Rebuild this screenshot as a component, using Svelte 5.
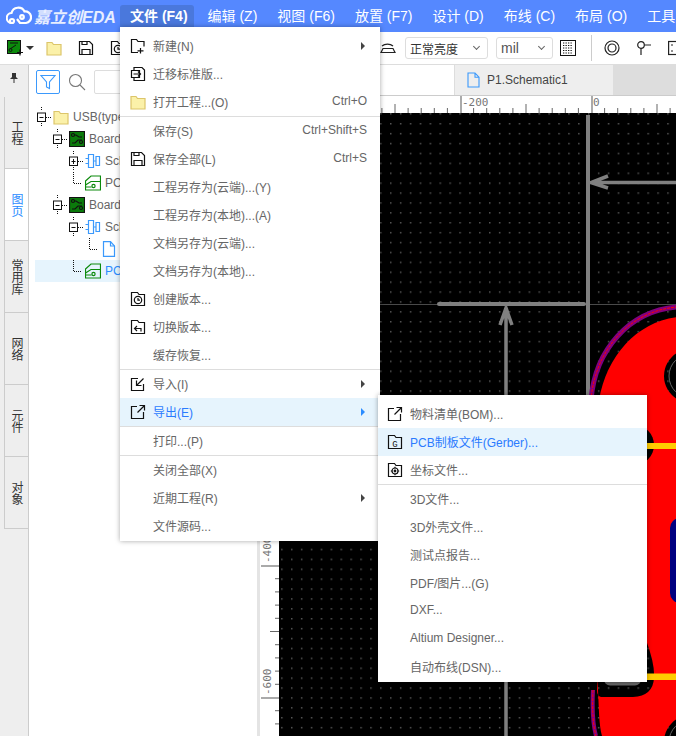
<script lang="ts">
  type Item = { label: string; icon?: string; key?: string; more?: boolean; active?: boolean; sep?: boolean };

  const topMenus = [
    { label: '文件 (F4)', active: true },
    { label: '编辑 (Z)' },
    { label: '视图 (F6)' },
    { label: '放置 (F7)' },
    { label: '设计 (D)' },
    { label: '布线 (C)' },
    { label: '布局 (O)' },
    { label: '工具 (T)' },
  ];

  const fileMenu: Item[] = [
    { label: '新建(N)', icon: 'newfolder', more: true },
    { label: '迁移标准版...', icon: 'migrate' },
    { label: '打开工程...(O)', icon: 'folder', key: 'Ctrl+O', sep: true },
    { label: '保存(S)', key: 'Ctrl+Shift+S' },
    { label: '保存全部(L)', icon: 'save', key: 'Ctrl+S' },
    { label: '工程另存为(云端)...(Y)' },
    { label: '工程另存为(本地)...(A)' },
    { label: '文档另存为(云端)...' },
    { label: '文档另存为(本地)...' },
    { label: '创建版本...', icon: 'version' },
    { label: '切换版本...', icon: 'switch' },
    { label: '缓存恢复...', sep: true },
    { label: '导入(I)', icon: 'import', more: true },
    { label: '导出(E)', icon: 'export', more: true, active: true, sep: true },
    { label: '打印...(P)', sep: true },
    { label: '关闭全部(X)' },
    { label: '近期工程(R)', more: true },
    { label: '文件源码...' },
  ];

  const exportMenu: Item[] = [
    { label: '物料清单(BOM)...', icon: 'export' },
    { label: 'PCB制板文件(Gerber)...', icon: 'gerber', active: true },
    { label: '坐标文件...', icon: 'coord', sep: true },
    { label: '3D文件...' },
    { label: '3D外壳文件...' },
    { label: '测试点报告...' },
    { label: 'PDF/图片...(G)' },
    { label: 'DXF...' },
    { label: 'Altium Designer...' },
    { label: '自动布线(DSN)...' },
  ];

  const sideTabs = [
    { label: '工程' },
    { label: '图页', active: true },
    { label: '常用库' },
    { label: '网络' },
    { label: '元件' },
    { label: '对象' },
  ];

  const tree = [
    { depth: 0, toggle: 'minus', icon: 'folder', label: 'USB(type-C)' },
    { depth: 1, toggle: 'minus', icon: 'board', label: 'Board1' },
    { depth: 2, toggle: 'plus', icon: 'sch', label: 'Schematic' },
    { depth: 2, toggle: 'leaf', icon: 'pcb', label: 'PCB1' },
    { depth: 1, toggle: 'minus', icon: 'board', label: 'Board2' },
    { depth: 2, toggle: 'minus', icon: 'sch', label: 'Schematic' },
    { depth: 3, toggle: 'leaf', icon: 'doc', label: 'P1' },
    { depth: 2, toggle: 'leaf', icon: 'pcb', label: 'PCB2', active: true },
  ];

  // top ruler: 0 sits at x=590, one small step is 13.1px
  const topTicks: { x: number; h: number; major: boolean }[] = [];
  for (let i = -16; i <= 7; i++) {
    const major = i % 10 === 0;
    const mid = !major && i % 5 === 0;
    topTicks.push({ x: 590 + i * 13.1, h: major ? 17 : mid ? 9 : 5, major });
  }

  // left ruler: -400 sits at y=565
  const leftTicks: { y: number; w: number; major: boolean }[] = [];
  for (let i = 0; i <= 13; i++) {
    const major = i % 10 === 0;
    const mid = !major && i % 5 === 0;
    leftTicks.push({ y: 565 + i * 13.2, w: major ? 18 : mid ? 9 : 4, major });
  }
</script>

{#snippet icon(name: string)}
  <svg class="ico" viewBox="0 0 16 16" width="16" height="16" fill="none" stroke="#111" stroke-width="1.2">
    {#if name === 'folder'}
      <path d="M1 2.500h5l1.500 2H15v10.500H1z" fill="#fbf1a9" stroke="#dcc56a" />
    {:else if name === 'newfolder'}
      <path d="M8 14.500H1.500V1.500h5l1.500 2h6v5" /><path d="M8 3.500h3M10.500 10v5.500M7.500 12.800h6" />
    {:else if name === 'migrate'}
      <path d="M4 4V1.500h8l2.500 2.500v10.500H4V12" /><path d="M1.500 4.500h8v7h-8z" fill="#fff" /><path d="M3.500 8h7M8 5.500 10.500 8 8 10.500" />
    {:else if name === 'save'}
      <path d="M1.500 1.500h10l3 3v10h-13z" /><path d="M4 14.500V9.500h8v5M4 1.500v3h5v-3" />
    {:else if name === 'version'}
      <path d="M1.500 14.500V1.500h6l1.500 2h5.500v11z" /><circle cx="8" cy="9" r="3.700" /><path d="M8 7v2.200h2" />
    {:else if name === 'switch'}
      <path d="M1.500 14.500V1.500h6l1.500 2h5.500v11z" /><path d="M4.500 9.500h6.500v3M7 7 4.500 9.500 7 12" />
    {:else if name === 'import'}
      <path d="M8 2.500H1.500v12h12V8" /><path d="M13.500 2.500 7 9M6.500 4.500V9.500H11.500" />
    {:else if name === 'export'}
      <path d="M7 2.500H1.500v12h12V8" /><path d="M7.500 8.500 14 2M9.500 1.500h5v5" />
    {:else if name === 'gerber'}
      <path d="M1.500 14.500V1.500h6l1.500 2h5.500v11z" />
      <text x="8" y="12.500" text-anchor="middle" class="gtext">G</text>
    {:else if name === 'coord'}
      <path d="M1.500 14.500V1.500h6l1.500 2h5.500v11z" /><circle cx="8" cy="9" r="3" /><circle cx="8" cy="9" r="0.800" fill="#111" /><path d="M8 4.800v1.400M8 11.800v1.400M3.800 9h1.400M10.800 9h1.400" />
    {:else if name === 'board'}
      <path d="M0.500 0.500h15v15h-15z" fill="#0b7a0b" stroke="#111" />
      <path d="M3 4h4l3 2h3M3 12h3l3-3h4" stroke="#111" /><circle cx="4" cy="4" r="1.500" fill="#0b7a0b" stroke="#111" /><circle cx="12" cy="11" r="1.500" fill="#0b7a0b" stroke="#111" />
    {:else if name === 'sch'}
      <path d="M3.500 1.500h5v13h-5zM11 3.500h3.500v9H11zM0.500 5.500h3M0.500 10.500h3M8.500 8H11" stroke="#3b99fc" />
    {:else if name === 'pcb'}
      <path d="M0.500 6 6 1h9.500v14H0.500z" stroke="#0c8a0c" />
      <path d="M0.500 10 6 6.500h9M0.500 12h6" stroke="#0c8a0c" /><circle cx="8.500" cy="11" r="1.600" stroke="#0c8a0c" />
    {:else if name === 'doc'}
      <path d="M2.500 0.700h7l4 4.300v10.300h-11z" stroke="#3b99fc" /><path d="M9.500 0.700V5h4" stroke="#3b99fc" />
    {/if}
  </svg>
{/snippet}

{#snippet menuList(items: Item[])}
  {#each items as item}
    <div class="item" class:active={item.active} class:sep={item.sep}>
      <span class="item-icon">
        {#if item.icon}{@render icon(item.icon)}{/if}
      </span>
      <span class="item-label">{item.label}</span>
      {#if item.key}<span class="item-key">{item.key}</span>{/if}
      {#if item.more}<span class="item-more"></span>{/if}
    </div>
  {/each}
{/snippet}

<div class="app">
  <header class="header">
    <div class="logo">
      <svg width="26" height="20" viewBox="0 0 26 20" fill="none" stroke="#fff" stroke-width="2.200">
        <path d="M7 17H6a5 5 0 0 1-.5-10A7 7 0 0 1 18.500 5.500 5.500 5.500 0 0 1 20 17h-6l-3-4" />
        <circle cx="6" cy="15" r="2" /><circle cx="16" cy="11" r="1.800" />
      </svg>
      <span class="logo-text">嘉立创EDA</span>
    </div>
    <nav class="topnav">
      {#each topMenus as m}
        <span class="topitem" class:active={m.active}>{m.label}</span>
      {/each}
    </nav>
  </header>

  <div class="toolbar">
    <span class="tool newpcb">
      <svg width="16" height="16" viewBox="0 0 16 16" fill="none">
        <rect x="0.500" y="0.500" width="13" height="13" fill="#0b8a0b" stroke="#111" />
        <path d="M3 3h8M3 9l6-4" stroke="#111" /><circle cx="3.500" cy="10" r="1.500" stroke="#111" />
        <path d="M10 12.500h6M13 9.500v6" stroke="#111" stroke-width="1.200" />
      </svg>
      <span class="caret"></span>
    </span>
    <span class="tool folder-tool">{@render icon('folder')}</span>
    <span class="tool save-tool">{@render icon('save')}</span>
    <span class="tool cam-tool">{@render icon('version')}</span>
    <span class="tool arc-tool">
      <svg width="16" height="16" viewBox="0 0 16 16" fill="none" stroke="#222" stroke-width="1.200">
        <path d="M2 6a7 5 0 0 1 11 0M3 8.500h10l2 4H1z" />
      </svg>
    </span>
    <div class="select bright"><span>正常亮度</span><i class="chev"></i></div>
    <div class="select unit"><span>mil</span><i class="chev"></i></div>
    <span class="tool grid-tool">
      <svg width="16" height="16" viewBox="0 0 16 16" fill="none">
        <rect x="0.500" y="0.500" width="15" height="15" stroke="#111" />
        <path d="M3 3h10M3 5.500h10M3 8h10M3 10.500h10M3 13h10" stroke="#111" stroke-width="1.200" stroke-dasharray="1.300 1.200" />
      </svg>
    </span>
    <span class="tool-sep"></span>
    <span class="tool ring-tool">
      <svg width="16" height="16" viewBox="0 0 16 16" fill="none" stroke="#222" stroke-width="1.200">
        <circle cx="8" cy="8" r="7" /><circle cx="8" cy="8" r="4" />
      </svg>
    </span>
    <span class="tool pin-tool">
      <svg width="16" height="16" viewBox="0 0 16 16" fill="none" stroke="#222" stroke-width="1.200">
        <circle cx="5" cy="5" r="3.300" /><path d="M8.300 5H15M5 8.300V15" />
      </svg>
    </span>
    <span class="tool box-tool">
      <svg width="16" height="16" viewBox="0 0 16 16" fill="none" stroke="#222" stroke-width="1.200">
        <rect x="0.600" y="1.500" width="14" height="13" /><path d="M3 5h2M3 11h2" />
      </svg>
    </span>
  </div>

  <div class="main">
    <aside class="side">
      <div class="pin">
        <svg width="8" height="10" viewBox="0 0 8 10"><path d="M2 0h4v4l2 2H4.500v4h-1V6H0l2-2z" fill="#333" /></svg>
      </div>
      {#each sideTabs as t}
        <div class="sidetab" class:active={t.active}><span>{t.label}</span></div>
      {/each}
    </aside>

    <section class="tree-panel">
      <div class="tree-tools">
        <span class="filter">
          <svg width="16" height="16" viewBox="0 0 16 16" fill="none" stroke="#3b99fc" stroke-width="1.100">
            <path d="M1 1.500h14L9.500 8v6.500L6.500 13V8z" />
          </svg>
        </span>
        <svg class="search" width="18" height="18" viewBox="0 0 18 18" fill="none" stroke="#777" stroke-width="1.100">
          <circle cx="7.500" cy="7.500" r="6" /><path d="M12 12l5 5" />
        </svg>
        <input class="search-box" type="text" />
      </div>
      <div class="tree">
        {#each tree as node}
          <div class="node" class:active={node.active} style="padding-left:{2 + node.depth * 16}px">
            <svg class="toggle" width="16" height="22" viewBox="0 0 16 22" fill="none" stroke="#111">
              {#if node.toggle === 'leaf'}
                <path d="M4.500 0v11.500H13" stroke-dasharray="1 1" />
              {:else}
                <path d="M4.500 1v4M4.500 17v4M9 11.500h5" stroke-dasharray="1 1" />
                <rect x="0.500" y="7" width="8" height="8.500" fill="#fff" />
                <path d="M2.500 11.500h4" />
                {#if node.toggle === 'plus'}<path d="M4.500 9v5" />{/if}
              {/if}
            </svg>
            {@render icon(node.icon)}
            <span class="node-label">{node.label}</span>
          </div>
        {/each}
      </div>
    </section>

    <section class="workspace">
      <div class="tabs">
        <div class="tab">
          <svg width="13" height="16" viewBox="0 0 13 16" fill="none" stroke="#3b99fc" stroke-width="1.100">
            <path d="M1 1h7l4 4.200V15H1zM8 1v4.200h4" />
          </svg>
          <span>P1.Schematic1</span>
        </div>
        <div class="tabs-rest"></div>
      </div>

      <div class="ruler-top">
        <svg width="398" height="17" viewBox="278 96 398 17">
          {#each topTicks as t}
            <rect x={t.x} y={113 - t.h} width={t.major ? 2 : 1} height={t.h} fill={t.major ? '#aaa' : '#666'} />
          {/each}
          <text x="461" y="106" class="ruler-text">-200</text>
          <text x="592" y="106" class="ruler-text">0</text>
        </svg>
      </div>

      <div class="stage">
        <div class="ruler-left">
          <svg width="22" height="195" viewBox="256 541 22 195">
            <rect x="256" y="541" width="3" height="195" fill="#e4e4e4" />
            {#each leftTicks as t}
              <rect x={278 - t.w} y={t.y} width={t.w} height={t.major ? 2 : 1} fill={t.major ? '#aaa' : '#666'} />
            {/each}
            <text transform="translate(270 563) rotate(-90)" class="ruler-text">-400</text>
            <text transform="translate(270 695) rotate(-90)" class="ruler-text">-600</text>
          </svg>
        </div>

        <svg class="board" width="398" height="623" viewBox="278 113 398 623">
          <defs>
            <pattern id="dots" x="290" y="123" width="9.900" height="9.900" patternUnits="userSpaceOnUse">
              <rect width="1.500" height="1.500" fill="#555" />
            </pattern>
          </defs>
          <rect x="278" y="113" width="398" height="623" fill="#000" />
          <rect x="278" y="113" width="398" height="623" fill="url(#dots)" />

          <!-- dimension lines -->
          <path d="M278 304.500H676" stroke="#4a4a4a" stroke-width="1" />
          <path d="M438 304H583" stroke="#808080" stroke-width="4" stroke-linecap="round" />
          <path d="M587 115V400" stroke="#808080" stroke-width="4" />
          <path d="M590 182.500H676M607 176 590 182.500 607 188" stroke="#808080" stroke-width="3.500" fill="none" />
          <path d="M505 308V736M499 325 505 308 511 325" stroke="#808080" stroke-width="3.500" fill="none" />

          <!-- board copper -->
          <path
            fill="#f00"
            fill-rule="evenodd"
            d="M676 317C636 322 606 355 598 400L597 690C598 710 598 725 601 736H676Z
               M690 349a27 27 0 1 0 .01 0Z
               M690 715a27 27 0 1 0 .01 0Z
               M600 640H645Q654 664 653 678Q652 696 632 697H600Q596 696 596 690Z"
          />
          <circle cx="633" cy="445" r="20" fill="#000" />
          <circle cx="690" cy="376" r="22" fill="none" stroke="#666" />
          <circle cx="690" cy="742" r="22" fill="none" stroke="#666" />
          <rect x="603" y="670" width="37" height="15.500" rx="6" fill="#666" />
          <rect x="669" y="518" width="24" height="85" rx="10" fill="#000080" />
          <rect x="640" y="443" width="36" height="6" fill="#ffcc00" />
          <rect x="640" y="673.500" width="36" height="6.500" fill="#ffcc00" />

          <!-- outline -->
          <path d="M590 400C594 350 628 311 676 307" fill="none" stroke="#800080" stroke-width="5" />
          <path d="M590 400C594 350 628 311 676 307" fill="none" stroke="#f00" stroke-width="1" stroke-dasharray="3 1" />
          <path d="M592 690C591 710 592 725 595 736" fill="none" stroke="#800080" stroke-width="4" />
          <path d="M592 690C591 710 592 725 595 736" fill="none" stroke="#f00" stroke-width="1" stroke-dasharray="3 1" />
        </svg>
      </div>
    </section>
  </div>

  <div class="menu file-menu">{@render menuList(fileMenu)}</div>
  <div class="menu export-menu">{@render menuList(exportMenu)}</div>
</div>

<style>
  :global(body) {
    margin: 0;
    background: #fff;
  }

  .app {
    position: relative;
    width: 676px;
    height: 736px;
    overflow: hidden;
    display: flex;
    flex-direction: column;
    font-family: 'Liberation Sans', 'Noto Sans CJK SC', sans-serif;
    font-size: 12px;
    color: #666;
  }

  .header {
    flex: 0 0 32px;
    display: flex;
    background: #5588ff;
    color: #fff;
  }

  .logo {
    flex: none;
    display: flex;
    align-items: center;
    gap: 2px;
    width: 120px;
    padding-left: 6px;
    box-sizing: border-box;
  }

  .logo-text {
    font-size: 16px;
    font-style: italic;
    font-weight: 700;
    color: #e8eeff;
    white-space: nowrap;
  }

  .topnav {
    display: flex;
    gap: 6px;
    padding-top: 5px;
    white-space: nowrap;
  }

  .topitem {
    height: 22px;
    line-height: 22px;
    padding: 0 7px;
    font-size: 14px;
  }

  .topitem.active {
    padding: 0 6px 0 10px;
    margin-right: 1px;
    font-weight: 700;
    background: #4a78dc;
    border-radius: 3px 3px 0 0;
  }

  .toolbar {
    flex: 0 0 33px;
    box-sizing: border-box;
    display: flex;
    align-items: center;
    padding-left: 7px;
    background: #fff;
    border-bottom: 1px solid #ddd;
  }

  .tool {
    flex: none;
    display: flex;
    align-items: center;
  }

  .ico {
    display: block;
    flex: none;
  }

  .gtext {
    font-family: 'Liberation Mono', monospace;
    font-size: 9px;
    fill: #111;
    stroke: none;
  }

  .newpcb {
    gap: 3px;
    width: 39px;
  }

  .caret {
    width: 0;
    height: 0;
    border: 4px solid transparent;
    border-top: 4px solid #333;
    border-bottom: 0;
  }

  .folder-tool,
  .save-tool {
    width: 32px;
  }

  .cam-tool {
    width: 270px;
  }

  .arc-tool {
    width: 25px;
  }

  .select {
    flex: none;
    box-sizing: border-box;
    display: flex;
    align-items: center;
    justify-content: space-between;
    height: 22px;
    padding: 0 8px 0 4px;
    border: 1px solid #ddd;
    border-radius: 3px;
    color: #333;
  }

  .bright {
    width: 83px;
    margin-right: 8px;
  }

  .unit {
    width: 57px;
    margin-right: 7px;
    font-size: 14px;
    color: #555;
  }

  .chev {
    width: 4px;
    height: 4px;
    margin-top: -3px;
    border-right: 1px solid #666;
    border-bottom: 1px solid #666;
    transform: rotate(45deg);
  }

  .tool-sep {
    flex: none;
    width: 1px;
    height: 26px;
    margin: 0 12px 0 15px;
    background: #ccc;
  }

  .ring-tool,
  .pin-tool {
    width: 32px;
  }

  .main {
    flex: 1;
    min-height: 0;
    display: flex;
  }

  .side {
    flex: 0 0 28px;
    box-sizing: border-box;
    padding-left: 4px;
    background: #eee;
    border-right: 1px solid #ccc;
  }

  .pin {
    box-sizing: border-box;
    height: 32px;
    padding-bottom: 6px;
    display: flex;
    align-items: center;
    justify-content: center;
    margin-left: -5px;
  }

  .sidetab {
    box-sizing: border-box;
    height: 72px;
    width: 24px;
    display: flex;
    align-items: center;
    justify-content: center;
    border-left: 1px solid #ccc;
    border-bottom: 1px solid #ccc;
    color: #333;
  }

  .sidetab:first-of-type {
    border-top: 1px solid #ccc;
    padding-bottom: 4px;
  }

  .sidetab span {
    writing-mode: vertical-rl;
    text-orientation: upright;
  }

  .sidetab.active {
    background: #fff;
    color: #2b8cff;
  }

  .tree-panel {
    flex: 0 0 228px;
    min-width: 0;
    background: #fff;
  }

  .tree-tools {
    display: flex;
    align-items: center;
    gap: 8px;
    height: 34px;
    padding: 0 7px;
  }

  .filter {
    box-sizing: border-box;
    width: 24px;
    height: 24px;
    display: flex;
    align-items: center;
    justify-content: center;
    border: 1px solid #3b99fc;
    border-radius: 2px;
  }

  .search-box {
    box-sizing: border-box;
    flex: 1;
    min-width: 0;
    height: 24px;
    border: 1px solid #ddd;
    border-radius: 2px;
  }

  .tree {
    width: 86px;
    margin-top: 7px;
    margin-left: 6px;
    overflow: hidden;
  }

  .node {
    display: flex;
    align-items: center;
    height: 22px;
    font-size: 12px;
    color: #666;
    white-space: nowrap;
  }

  .node.active {
    background: #e6f4fd;
    color: #2b8cff;
  }

  .toggle {
    flex: none;
  }

  .node-label {
    margin-left: 4px;
  }

  .workspace {
    flex: 0 0 420px;
    min-width: 0;
    display: flex;
    flex-direction: column;
  }

  .tabs {
    flex: 0 0 31px;
    box-sizing: border-box;
    display: flex;
    padding-left: 197px;
    border-bottom: 1px solid #ccc;
  }

  .tab {
    box-sizing: border-box;
    width: 160px;
    display: flex;
    align-items: center;
    gap: 7px;
    padding-left: 12px;
    font-size: 12px;
    color: #444;
    background: #eee;
    border-left: 1px solid #ddd;
    border-right: 1px solid #ddd;
  }

  .tabs-rest {
    flex: 1;
    background: #ddd;
  }

  .ruler-top {
    flex: 0 0 17px;
    padding-left: 22px;
  }

  .ruler-top svg,
  .ruler-left svg,
  .board {
    display: block;
    flex: none;
  }

  .ruler-text {
    font-family: 'DejaVu Sans Mono', monospace;
    font-size: 11px;
    fill: #777;
  }

  .stage {
    flex: 1;
    min-height: 0;
    display: flex;
  }

  .ruler-left {
    flex: 0 0 22px;
    display: flex;
    align-items: flex-end;
  }

  .menu {
    position: absolute;
    box-sizing: border-box;
    padding: 5px 0 1px;
    background: #fff;
    box-shadow: 0 0 5px rgba(0, 0, 0, 0.35);
  }

  .file-menu {
    left: 120px;
    top: 27px;
    width: 260px;
    height: 514px;
  }

  .export-menu {
    left: 378px;
    top: 395px;
    width: 269px;
    height: 287px;
  }

  .export-menu .item {
    padding-left: 9px;
  }

  .item {
    box-sizing: border-box;
    position: relative;
    display: flex;
    align-items: center;
    height: 28px;
    padding: 0 13px 0 10px;
    white-space: nowrap;
  }

  .item.sep {
    height: 29px;
    border-bottom: 1px solid #ddd;
  }

  .item.active {
    background: #e6f4fd;
    color: #2b7bff;
  }

  .item-icon {
    flex: 0 0 23px;
  }

  .item-label {
    flex: 1;
    margin-top: -2px;
  }

  .item-key {
    color: #666;
    margin-top: -2px;
  }

  .item-more {
    width: 0;
    height: 0;
    margin-right: 2px;
    border-left: 4px solid #444;
    border-top: 4px solid transparent;
    border-bottom: 4px solid transparent;
  }

  .item.active .item-more {
    border-left-color: #2b8cff;
  }
</style>
